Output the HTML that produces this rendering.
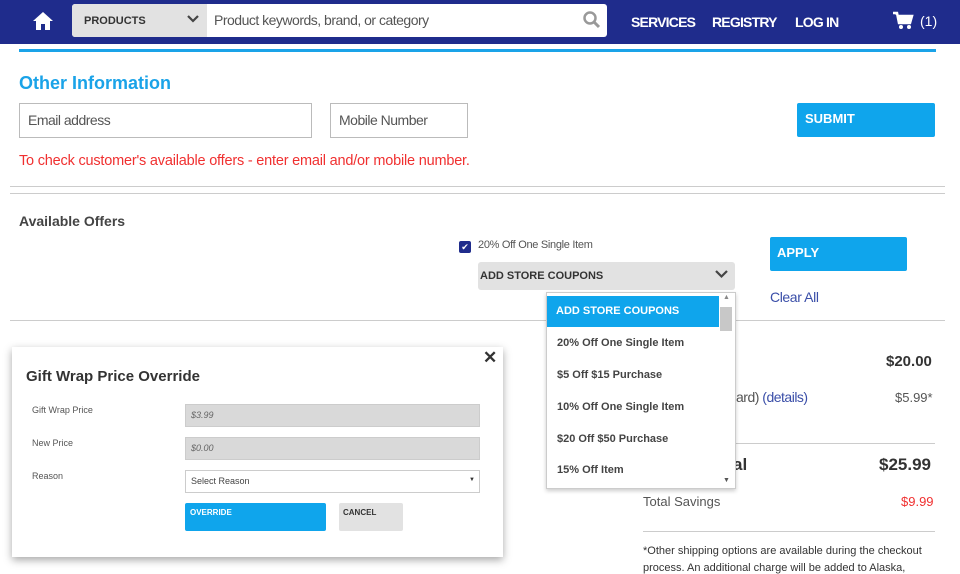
<!DOCTYPE html>
<html><head><style>
body{margin:0;width:960px;height:574px;overflow:hidden;background:#fff;font-family:"Liberation Sans",sans-serif;position:relative}
div,span{position:absolute;box-sizing:border-box}
.b{font-weight:bold}
</style></head><body>
<div style="left:0;top:0;width:960px;height:44px;background:#1f2c8c"></div>
<svg style="position:absolute;left:32px;top:11px" width="22" height="20" viewBox="0 0 22 20"><path d="M11 1 L1 10 H4 V19 H9 V13 H13 V19 H18 V10 H21 Z" fill="#fff"/></svg>
<div style="left:72px;top:4px;width:535px;height:33px;background:#fff;border-radius:3px"></div>
<div style="left:72px;top:4px;width:135px;height:33px;background:#e2e2e2;border-radius:3px 0 0 3px"></div>
<span class="b" style="left:84px;top:15px;font-size:11px;color:#333">PRODUCTS</span>
<svg style="position:absolute;left:187px;top:15px" width="12" height="9"><path d="M1 1 L6 6 L11 1" stroke="#444" stroke-width="2.2" fill="none"/></svg>
<span style="left:214px;top:12px;font-size:14px;color:#555;letter-spacing:-0.5px">Product keywords, brand, or category</span>
<svg style="position:absolute;left:583px;top:11px" width="18" height="18"><circle cx="7" cy="7" r="5.5" stroke="#999" stroke-width="2.5" fill="none"/><path d="M11 11 L16 16" stroke="#999" stroke-width="3"/></svg>
<span class="b" style="left:631px;top:14px;font-size:14px;color:#fff;letter-spacing:-0.8px">SERVICES</span>
<span class="b" style="left:712px;top:14px;font-size:14px;color:#fff;letter-spacing:-0.8px">REGISTRY</span>
<span class="b" style="left:795px;top:14px;font-size:14px;color:#fff;letter-spacing:-0.8px">LOG IN</span>
<svg style="position:absolute;left:892px;top:11px" width="22" height="19"><path d="M1 2 H5 L7 12 H18 L20 5 H6" stroke="#fff" stroke-width="2.5" fill="#fff"/><circle cx="9" cy="16" r="2" fill="#fff"/><circle cx="17" cy="16" r="2" fill="#fff"/></svg>
<span style="left:920px;top:13px;font-size:14px;color:#fff">(1)</span>
<div style="left:19px;top:49px;width:917px;height:3px;background:#1aa3e8"></div>

<span class="b" style="left:19px;top:73px;font-size:18px;color:#1aa3e8">Other Information</span>
<div style="left:19px;top:103px;width:293px;height:35px;border:1px solid #bbb"></div>
<span style="left:28px;top:112px;font-size:14px;color:#555;letter-spacing:-0.5px">Email address</span>
<div style="left:330px;top:103px;width:138px;height:35px;border:1px solid #bbb"></div>
<span style="left:339px;top:112px;font-size:14px;color:#555;letter-spacing:-0.5px">Mobile Number</span>
<div style="left:797px;top:103px;width:138px;height:34px;background:#0fa5ec;border-radius:2px"></div>
<span class="b" style="left:805px;top:111px;font-size:13px;color:#fff">SUBMIT</span>
<span style="left:19px;top:153px;font-size:14.5px;color:#f03030;letter-spacing:-0.2px">To check customer's available offers - enter email and/or mobile number.</span>
<div style="left:10px;top:186px;width:935px;height:1px;background:#ccc"></div>
<div style="left:10px;top:193px;width:935px;height:1px;background:#ccc"></div>
<span class="b" style="left:19px;top:213px;font-size:14px;color:#444">Available Offers</span>
<div style="left:459px;top:241px;width:12px;height:12px;background:#1f2c8c;border-radius:2px;color:#fff;font-size:9px;text-align:center;line-height:12px">✔</div>
<span style="left:478px;top:239px;font-size:11px;color:#555;letter-spacing:-0.3px">20% Off One Single Item</span>
<div style="left:478px;top:262px;width:257px;height:28px;background:#e2e2e2;border-radius:3px"></div>
<span class="b" style="left:480px;top:270px;font-size:11px;color:#333">ADD STORE COUPONS</span>
<svg style="position:absolute;left:715px;top:270px" width="13" height="9"><path d="M1 1 L6.5 6.5 L12 1" stroke="#444" stroke-width="2.2" fill="none"/></svg>
<div style="left:770px;top:237px;width:137px;height:34px;background:#0fa5ec;border-radius:2px"></div>
<span class="b" style="left:777px;top:245px;font-size:13px;color:#fff">APPLY</span>
<span style="left:770px;top:289px;font-size:14px;color:#3a4ea8;letter-spacing:-0.4px">Clear All</span>
<div style="left:10px;top:320px;width:935px;height:1px;background:#ccc"></div>

<span class="b" style="left:886px;top:353px;font-size:15px;color:#333">$20.00</span>
<span style="left:736px;top:389px;font-size:14px;color:#555;letter-spacing:-0.5px">ard) <span style="position:static;color:#3a4ea8">(details)</span></span>
<span style="left:895px;top:390px;font-size:13px;color:#555">$5.99*</span>
<div style="left:643px;top:443px;width:292px;height:1px;background:#ccc"></div>
<span class="b" style="left:733px;top:455px;font-size:17px;color:#333">al</span>
<span class="b" style="left:879px;top:455px;font-size:17px;color:#333">$25.99</span>
<span style="left:643px;top:494px;font-size:13px;color:#555">Total Savings</span>
<span style="left:901px;top:494px;font-size:13px;color:#f03030">$9.99</span>
<div style="left:643px;top:531px;width:292px;height:1px;background:#ccc"></div>
<span style="left:643px;top:545px;font-size:11px;color:#333;white-space:nowrap">*Other shipping options are available during the checkout</span>
<span style="left:643px;top:562px;font-size:11px;color:#333;white-space:nowrap">process. An additional charge will be added to Alaska,</span>

<div style="left:546px;top:292px;width:190px;height:197px;background:#fff;border:1px solid #ccc;box-shadow:0 2px 4px rgba(0,0,0,.2)"></div>
<div style="left:547px;top:296px;width:172px;height:31px;background:#0fa5ec"></div>
<div style="left:720px;top:307px;width:12px;height:24px;background:#c8c8c8"></div>
<span style="left:723px;top:294px;font-size:7px;color:#888">▲</span>
<span style="left:723px;top:477px;font-size:7px;color:#555">▼</span>
<span class="b" style="left:556px;top:305px;font-size:11px;color:#fff">ADD STORE COUPONS</span>
<span class="b" style="left:557px;top:337px;font-size:11px;color:#444">20% Off One Single Item</span>
<span class="b" style="left:557px;top:369px;font-size:11px;color:#444">$5 Off $15 Purchase</span>
<span class="b" style="left:557px;top:401px;font-size:11px;color:#444">10% Off One Single Item</span>
<span class="b" style="left:557px;top:433px;font-size:11px;color:#444">$20 Off $50 Purchase</span>
<span class="b" style="left:557px;top:464px;font-size:11px;color:#444">15% Off Item</span>

<div style="left:12px;top:347px;width:491px;height:210px;background:#fff;box-shadow:0 3px 8px rgba(0,0,0,.35)"></div>
<span class="b" style="left:483px;top:348px;font-size:17px;color:#333">✕</span>
<span class="b" style="left:26px;top:368px;font-size:15px;color:#333">Gift Wrap Price Override</span>
<span style="left:32px;top:405px;font-size:9px;color:#555">Gift Wrap Price</span>
<div style="left:185px;top:404px;width:295px;height:23px;background:#d9d9d9;border:1px solid #ccc"></div>
<span style="left:191px;top:410px;font-size:9px;font-style:italic;color:#666">$3.99</span>
<span style="left:32px;top:438px;font-size:9px;color:#555">New Price</span>
<div style="left:185px;top:437px;width:295px;height:23px;background:#d9d9d9;border:1px solid #ccc"></div>
<span style="left:191px;top:443px;font-size:9px;font-style:italic;color:#666">$0.00</span>
<span style="left:32px;top:471px;font-size:9px;color:#555">Reason</span>
<div style="left:185px;top:470px;width:295px;height:23px;border:1px solid #ccc"></div>
<span style="left:191px;top:476px;font-size:9px;color:#444">Select Reason</span>
<span style="left:469px;top:477px;font-size:6px;color:#333">▼</span>
<div style="left:185px;top:503px;width:141px;height:28px;background:#0fa5ec;border-radius:2px"></div>
<span class="b" style="left:190px;top:508px;font-size:8px;color:#fff">OVERRIDE</span>
<div style="left:339px;top:503px;width:64px;height:28px;background:#e2e2e2;border-radius:2px"></div>
<span class="b" style="left:343px;top:508px;font-size:8px;color:#333">CANCEL</span>
</body></html>
